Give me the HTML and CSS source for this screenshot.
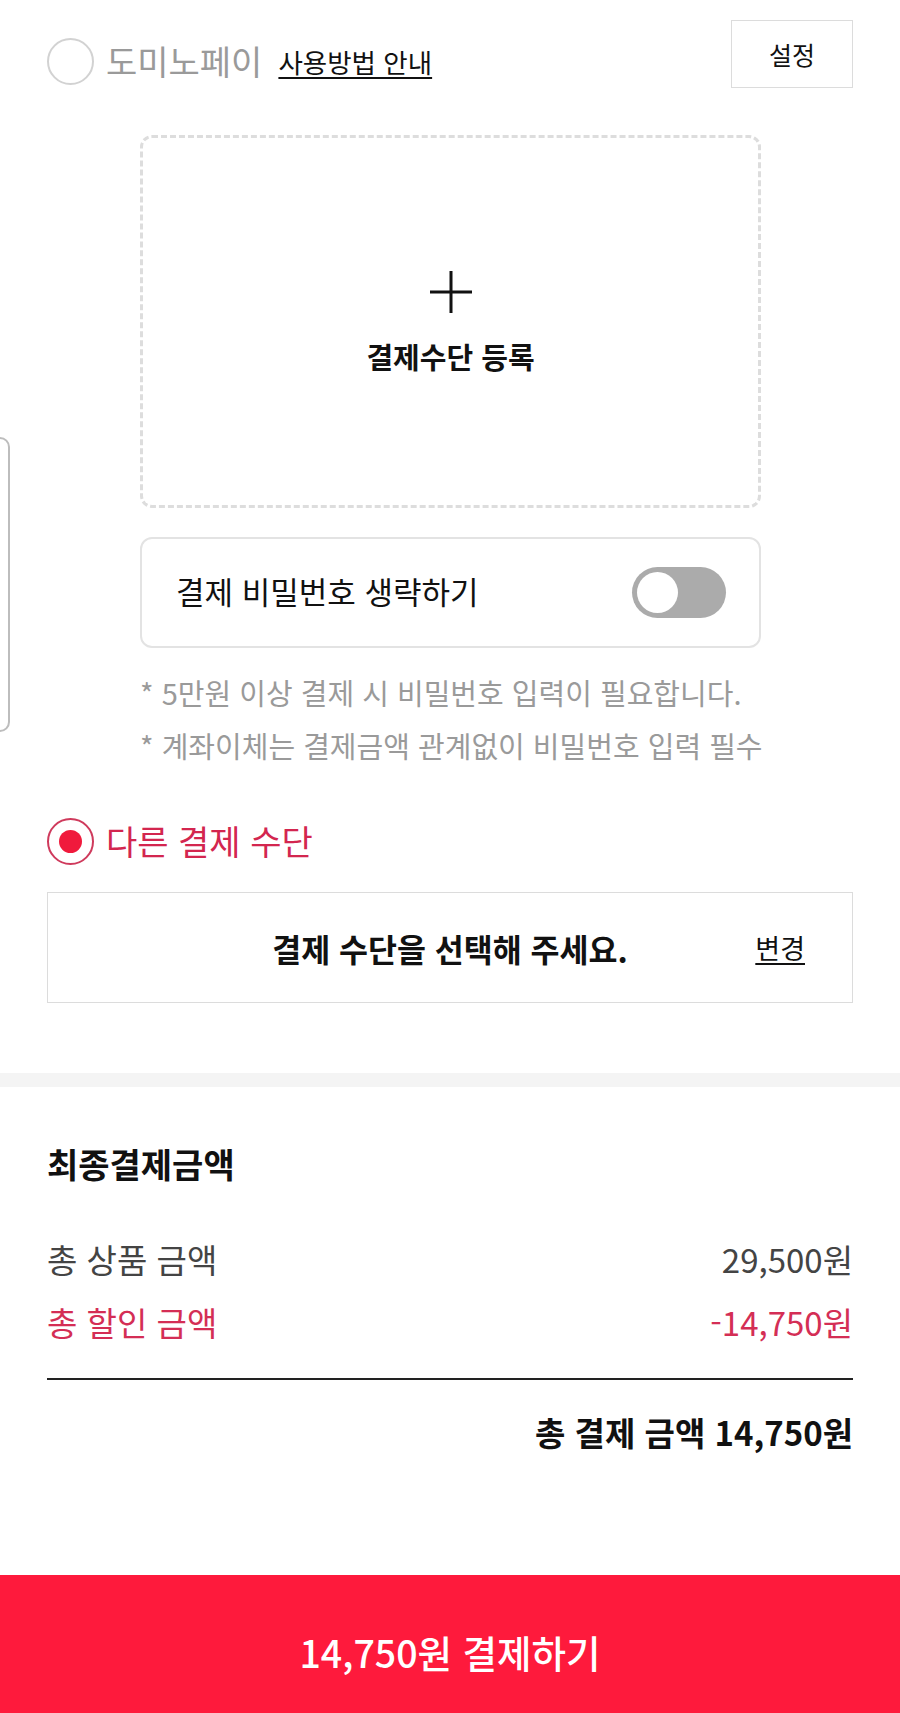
FILE: index.html
```html
<!DOCTYPE html>
<html lang="ko">
<head>
<meta charset="utf-8">
<title>결제</title>
<link rel="stylesheet" href="styles.css">
</head>
<body>
<div class="edge-handle"></div>
<div class="page">
  <section class="pay">
    <div class="pay-row">
      <div class="pay-left">
        <span class="radio"></span>
        <span class="pay-label muted">도미노페이</span>
        <a class="guide">사용방법 안내</a>
      </div>
      <button class="btn-setting">설정</button>
    </div>

    <div class="register">
      <svg class="plus" width="44" height="44" viewBox="0 0 44 44">
        <path d="M22 1 V43 M1 22 H43" stroke="#111" stroke-width="3" fill="none"/>
      </svg>
      <div class="register-text">결제수단 등록</div>
    </div>

    <div class="toggle-box">
      <span class="toggle-label">결제 비밀번호 생략하기</span>
      <span class="switch"><span class="knob"></span></span>
    </div>

    <div class="notes">
      <p>* 5만원 이상 결제 시 비밀번호 입력이 필요합니다.</p>
      <p>* 계좌이체는 결제금액 관계없이 비밀번호 입력 필수</p>
    </div>

    <div class="other-row">
      <span class="radio checked"><span class="dot"></span></span>
      <span class="pay-label red">다른 결제 수단</span>
    </div>

    <div class="method-box">
      <span></span>
      <span class="method-text">결제 수단을 선택해 주세요.</span>
      <a class="change">변경</a>
    </div>
  </section>

  <div class="band"></div>

  <section class="summary">
    <h2 class="summary-title">최종결제금액</h2>
    <div class="rows">
      <div class="row"><span>총 상품 금액</span><span>29,500원</span></div>
      <div class="row red"><span>총 할인 금액</span><span>-14,750원</span></div>
    </div>
    <div class="divider"></div>
    <div class="total">총 결제 금액 14,750원</div>
  </section>

  <button class="pay-btn">14,750원 결제하기</button>
</div>
</body>
</html>
```

FILE: styles.css
```css
* { box-sizing: border-box; }

html, body {
  margin: 0;
  padding: 0;
  background: #fff;
}

body {
  font-family: "Noto Sans CJK KR", "Noto Sans", sans-serif;
  color: #111;
  position: relative;
}

.page {
  display: flex;
  flex-direction: column;
  min-height: 1713px;
}

.edge-handle {
  position: absolute;
  left: -22px;
  top: 437px;
  width: 32px;
  height: 295px;
  border: 2px solid #bdbdbd;
  border-radius: 10px;
}

.pay {
  padding: 20px 47px 0;
  display: flex;
  flex-direction: column;
}

.pay-row {
  display: flex;
  justify-content: space-between;
  align-items: flex-start;
}

.pay-left {
  display: flex;
  align-items: center;
  margin-top: 18px;
  height: 47px;
}

.radio {
  width: 47px;
  height: 47px;
  flex: none;
  border-radius: 50%;
  border: 2px solid #d2d2d2;
  display: flex;
  align-items: center;
  justify-content: center;
}

.radio.checked {
  border-color: #cf3a5c;
}

.dot {
  width: 23px;
  height: 23px;
  border-radius: 50%;
  background: #f01a3c;
}

.pay-label {
  font-size: 34px;
  line-height: 46px;
  margin-left: 12px;
  margin-top: -2px;
}

.muted { color: #9a9a9a; }
.red { color: #d3264f; }

.guide {
  font-size: 26.5px;
  line-height: 36px;
  margin-left: 16px;
  color: #111;
  text-decoration: underline;
  text-decoration-thickness: 2px;
  text-underline-offset: 4px;
}

.btn-setting {
  width: 122px;
  height: 68px;
  border: 1.5px solid #dcdcdc;
  background: #fff;
  font-family: inherit;
  font-size: 25px;
  color: #111;
  padding: 0;
}

.register {
  margin: 47px 92px 0 93px;
  height: 373px;
  border: 3px dashed #dddddd;
  border-radius: 12px;
  display: flex;
  flex-direction: column;
  align-items: center;
  justify-content: center;
  gap: 24px;
}

.plus { display: block; }

.register-text {
  font-size: 29px;
  font-weight: 700;
  line-height: 36px;
}

.toggle-box {
  margin: 29px 92px 0 93px;
  height: 111px;
  border: 2px solid #e3e3e3;
  border-radius: 12px;
  display: flex;
  align-items: center;
  justify-content: space-between;
  padding: 0 33px 0 34px;
}

.toggle-label {
  font-size: 31px;
  line-height: 44px;
  margin-top: -4px;
}

.switch {
  width: 94px;
  height: 51px;
  border-radius: 26px;
  background: #ababab;
  display: flex;
  align-items: center;
  padding: 0 5px;
}

.knob {
  width: 41px;
  height: 41px;
  border-radius: 50%;
  background: #fff;
}

.notes {
  margin: 18px 0 0 93px;
}

.notes p {
  margin: 0;
  font-size: 29px;
  line-height: 53px;
  color: #9a9a9a;
  white-space: nowrap;
}

.other-row {
  display: flex;
  align-items: center;
  margin-top: 46px;
  height: 47px;
}

.method-box {
  margin-top: 27px;
  height: 111px;
  border: 1.5px solid #dcdcdc;
  display: grid;
  grid-template-columns: 1fr auto 1fr;
  align-items: center;
  padding: 0 47px;
}

.method-text {
  font-size: 31.5px;
  font-weight: 700;
  line-height: 44px;
}

.change {
  justify-self: end;
  font-size: 27px;
  line-height: 36px;
  color: #111;
  text-decoration: underline;
  text-decoration-thickness: 1.5px;
  text-underline-offset: 4px;
}

.band {
  margin-top: 70px;
  height: 14px;
  background: #f4f4f4;
}

.summary {
  padding: 0 47px;
}

.summary-title {
  margin: 56px 0 0;
  font-size: 34px;
  font-weight: 700;
  line-height: 42px;
}

.rows {
  margin-top: 52px;
  display: flex;
  flex-direction: column;
  gap: 19px;
}

.row {
  display: flex;
  justify-content: space-between;
  font-size: 33px;
  line-height: 44px;
  color: #444;
}

.row.red { color: #d42e55; }

.divider {
  margin-top: 34px;
  height: 2px;
  background: #222;
}

.total {
  margin-top: 30px;
  text-align: right;
  font-size: 33px;
  font-weight: 700;
  line-height: 44px;
}

.pay-btn {
  margin-top: auto;
  height: 138px;
  width: 100%;
  border: none;
  background: #fe1a3c;
  color: #fff;
  font-family: inherit;
  font-size: 37.5px;
  font-weight: 500;
  padding: 14px 0 0;
}
```
